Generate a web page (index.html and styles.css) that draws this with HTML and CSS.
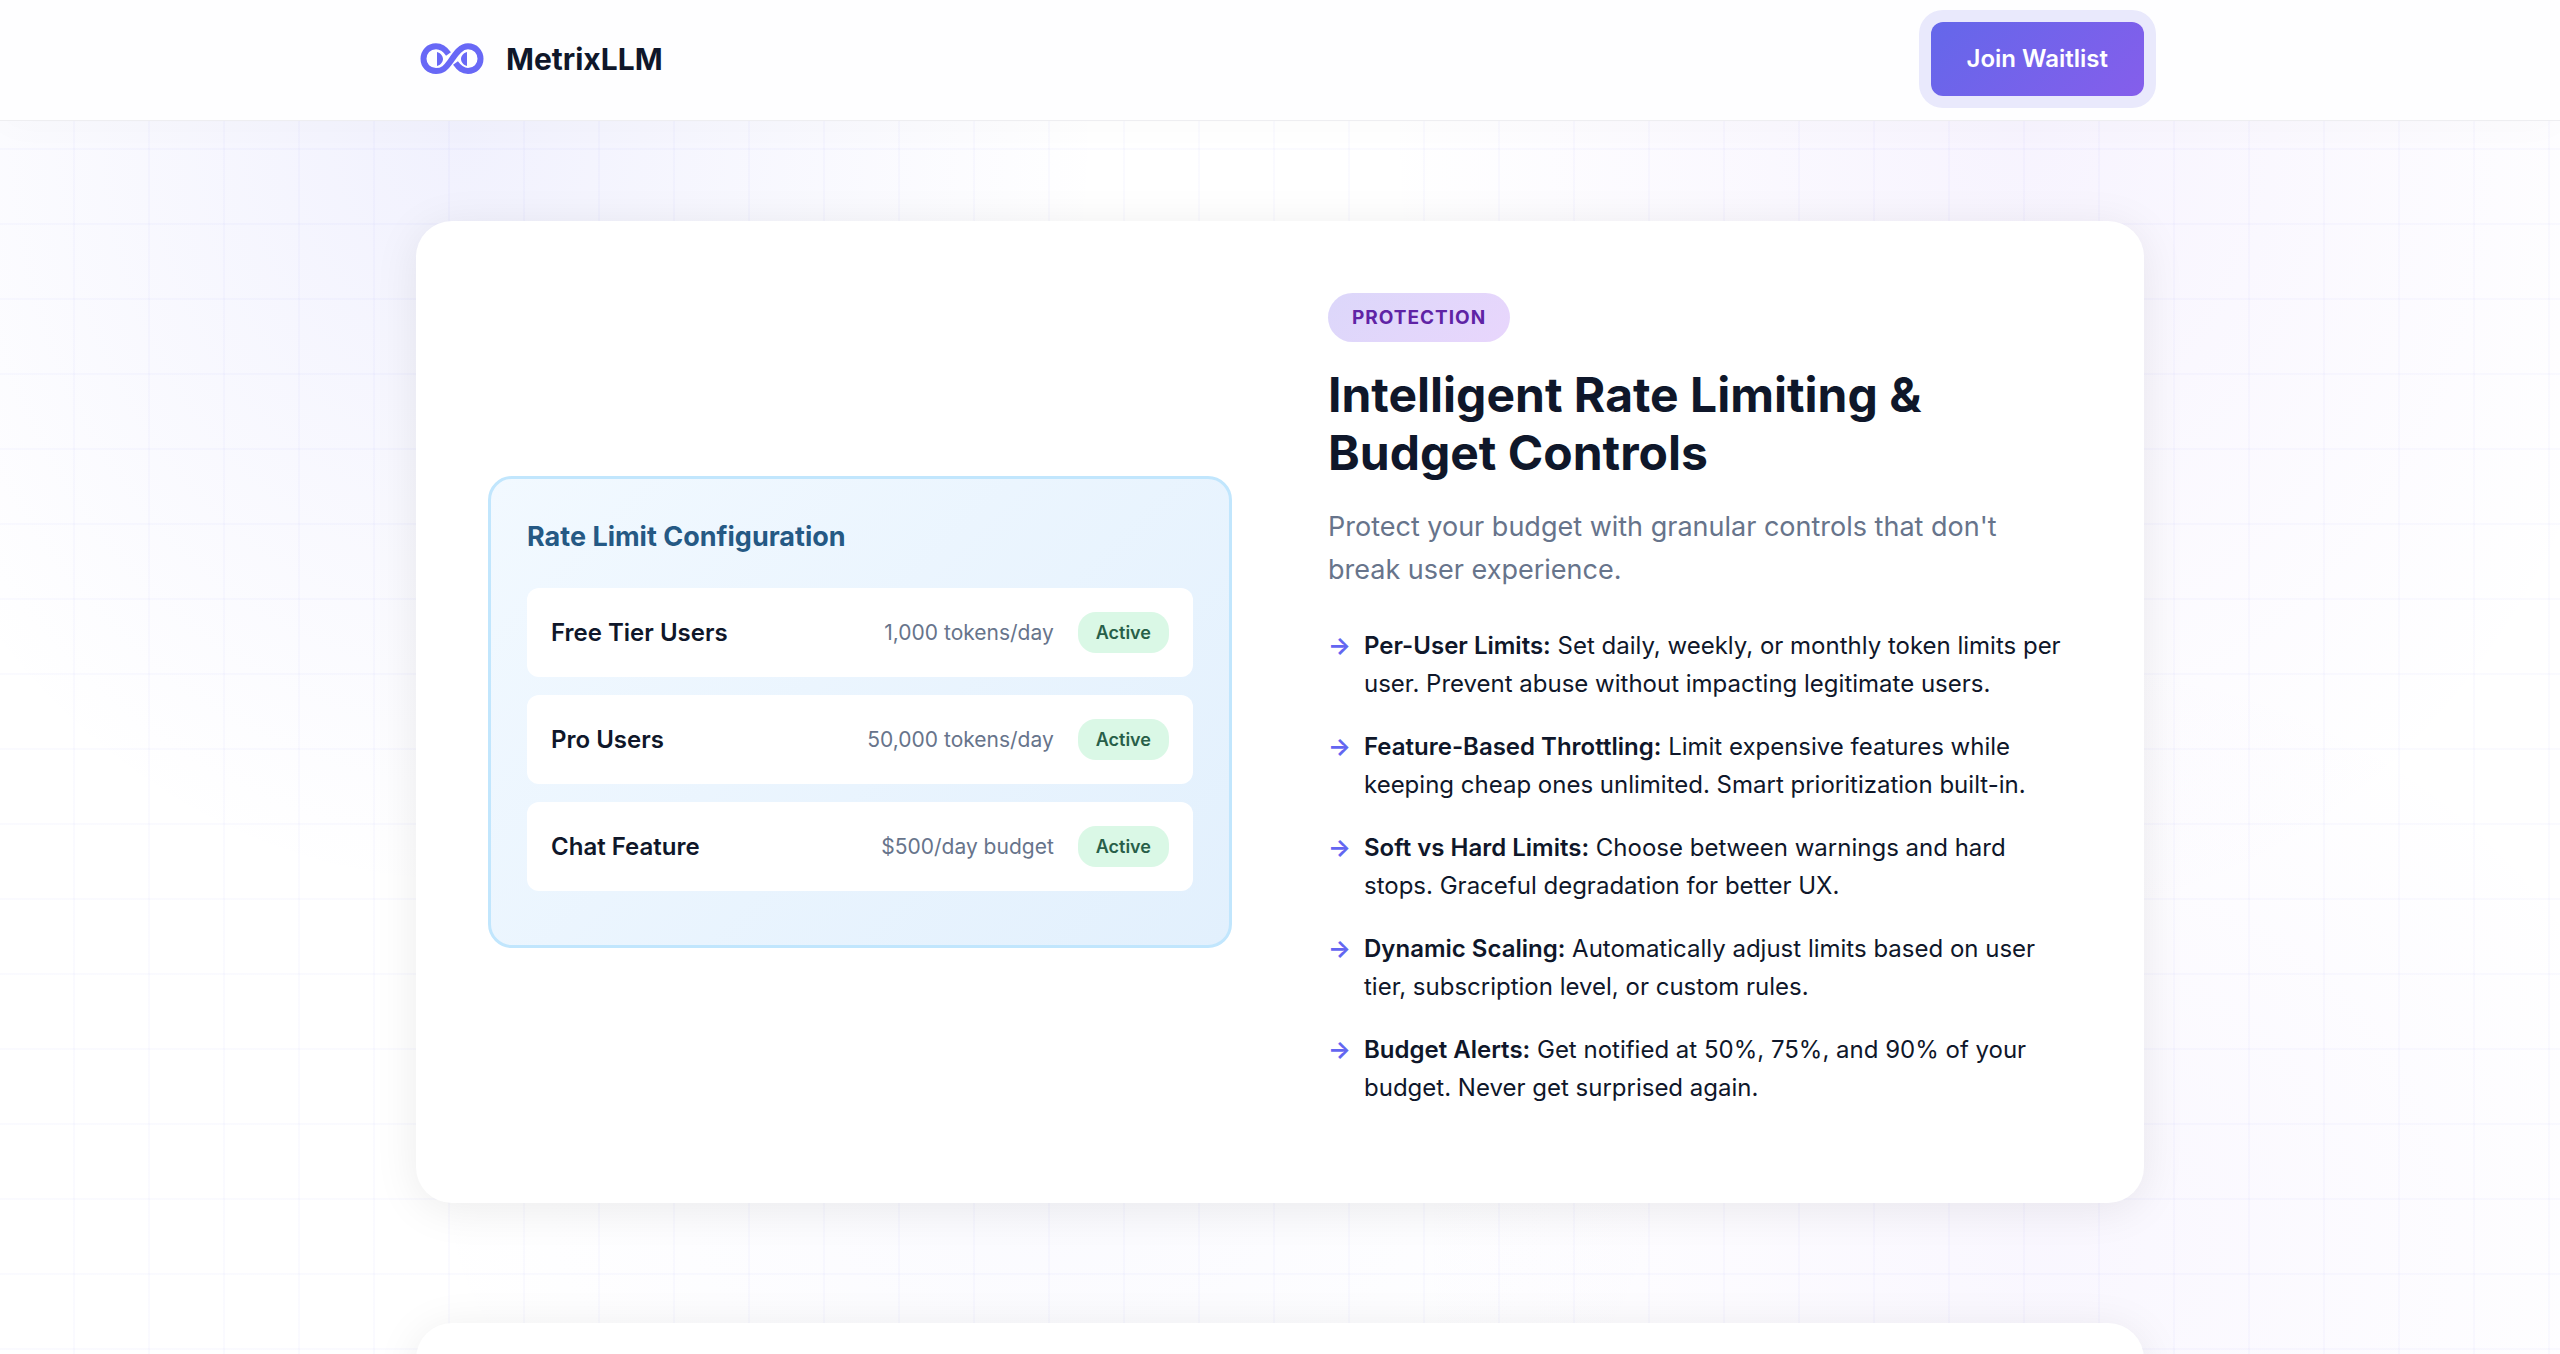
FILE: index.html
```html
<!DOCTYPE html>
<html lang="en">
<head>
<meta charset="utf-8">
<meta name="viewport" content="width=device-width, initial-scale=1">
<title>MetrixLLM</title>
<link rel="stylesheet" href="styles.css">
</head>
<body>
<header class="site-header">
  <div class="container header-row">
    <a class="brand" href="#">
      <svg class="brand-logo" viewBox="0 0 72 48" aria-hidden="true">
        <g fill="none" stroke="#6868f6" stroke-width="6">
          <path d="M32.500 19C29 14 26 11.300 20 11.300C12.500 11.300 7.500 17 7.500 23.800C7.500 30.500 12.500 36 20 36C27 36 30 32.500 34 27C39 20 44 11.300 52 11.300C59.500 11.300 64.500 17 64.500 23.800C64.500 30.500 59.500 36 52 36C46.500 36 43.500 33.500 39.500 28"/>
        </g>
        <path fill="#6868f6" d="M21 17C24.500 18 27 21 27 24C27 27 24.500 30 21 31ZM51 17C47.500 18 45 21 45 24C45 27 47.500 30 51 31Z"/>
      </svg>
      <span class="brand-name">MetrixLLM</span>
    </a>
    <button class="btn-primary" type="button">Join Waitlist</button>
  </div>
</header>
<main class="container sections">
  <section class="card">
    <div class="panel">
      <h3 class="panel-title">Rate Limit Configuration</h3>
      <ul class="limits">
        <li class="limit"><span class="limit-name">Free Tier Users</span><span class="limit-value">1,000 tokens/day</span><span class="status">Active</span></li>
        <li class="limit"><span class="limit-name">Pro Users</span><span class="limit-value">50,000 tokens/day</span><span class="status">Active</span></li>
        <li class="limit"><span class="limit-name">Chat Feature</span><span class="limit-value">$500/day budget</span><span class="status">Active</span></li>
      </ul>
    </div>
    <div class="copy">
      <span class="tag">PROTECTION</span>
      <h2 class="title">Intelligent Rate Limiting &amp; Budget Controls</h2>
      <p class="lead">Protect your budget with granular controls that don't break user experience.</p>
      <ul class="features">
        <li class="feature"><p><strong>Per-User Limits:</strong> Set daily, weekly, or monthly token limits per user. Prevent abuse without impacting legitimate users.</p></li>
        <li class="feature"><p><strong>Feature-Based Throttling:</strong> Limit expensive features while keeping cheap ones unlimited. Smart prioritization built-in.</p></li>
        <li class="feature"><p><strong>Soft vs Hard Limits:</strong> Choose between warnings and hard stops. Graceful degradation for better UX.</p></li>
        <li class="feature"><p><strong>Dynamic Scaling:</strong> Automatically adjust limits based on user tier, subscription level, or custom rules.</p></li>
        <li class="feature"><p><strong>Budget Alerts:</strong> Get notified at 50%, 75%, and 90% of your budget. Never get surprised again.</p></li>
      </ul>
    </div>
  </section>
  <section class="card"></section>
</main>
</body>
</html>
```
FILE: styles.css
```css
* { box-sizing: border-box; margin: 0; padding: 0; }

body {
  font-family: Inter, "Liberation Sans", sans-serif;
  font-size: 24px;
  line-height: 38px;
  color: #0f172a;
  background-color: #fff;
  background-image:
    linear-gradient(to right, transparent 73px, rgba(99, 102, 241, .03) 73px),
    linear-gradient(to bottom, transparent 73px, rgba(99, 102, 241, .03) 73px),
    radial-gradient(ellipse 640px 760px at 18% 10%, rgba(99, 102, 241, .09), transparent),
    radial-gradient(ellipse 640px 800px at 79% 10%, rgba(139, 92, 246, .07), transparent),
    radial-gradient(ellipse 640px 600px at 80% 92%, rgba(139, 92, 246, .05), transparent),
    radial-gradient(ellipse 640px 400px at 41% 88%, rgba(99, 102, 241, .03), transparent);
  background-size: 75px 75px, 75px 75px, auto, auto, auto, auto;
  background-attachment: fixed;
}

ul { list-style: none; }

.container { width: 100%; max-width: 1800px; margin: 0 auto; padding: 0 36px; }

.site-header {
  padding: 22px 0 24px;
  background: #fefeff;
  border-bottom: 1px solid #eeeef1;
  box-shadow: 0 6px 36px rgba(0, 0, 0, .02);
}
.header-row { display: flex; align-items: center; justify-content: space-between; }
.brand { display: flex; align-items: center; gap: 18px; color: inherit; text-decoration: none; }
.brand-logo { width: 72px; height: 48px; }
.brand-name { font-size: 30px; line-height: 48px; font-weight: 700; }

.btn-primary {
  padding: 18px 36px;
  border: 0;
  border-radius: 12px;
  font: 600 24px/38px Inter, "Liberation Sans", sans-serif;
  color: #fff;
  background: linear-gradient(135deg, #6467ea, #855eeb);
  box-shadow: 0 0 0 12px #e9e9fc;
}

.sections { display: grid; gap: 120px; padding-top: 100px; }

.card {
  display: grid;
  grid-template-columns: 1fr 1fr;
  gap: 96px;
  align-items: center;
  padding: 72px;
  border-radius: 36px;
  background: #fff;
  box-shadow: 0 6px 45px rgba(0, 0, 0, .08);
}

.panel {
  padding: 36px;
  border: 3px solid #c1e6fd;
  border-radius: 24px;
  background: linear-gradient(135deg, #f2f9ff, #e2f0fd);
}
.panel-title { margin-bottom: 30px; font-size: 27px; line-height: 43px; font-weight: 700; color: #255984; }
.limits { display: grid; gap: 18px; margin-bottom: 18px; }
.limit { display: flex; align-items: center; gap: 24px; padding: 24px; border-radius: 12px; background: #fff; }
.limit-name { flex: 1; font-weight: 600; }
.limit-value { font-size: 21px; color: #67748b; }
.status {
  padding: 6px 18px;
  border-radius: 18px;
  font-size: 18px;
  line-height: 29px;
  font-weight: 600;
  color: #285f49;
  background: #daf8e6;
}

.copy { display: flex; flex-direction: column; align-items: flex-start; }
.tag {
  padding: 9px 24px;
  border-radius: 30px;
  font-size: 19px;
  line-height: 31px;
  font-weight: 700;
  letter-spacing: 1px;
  color: #5f23a5;
  background: linear-gradient(135deg, #dcd7fa, #e8d6fc);
}
.title { margin: 24px 0 23px; font-size: 48px; line-height: 58px; font-weight: 700; }
.lead { margin-bottom: 36px; font-size: 27px; line-height: 43px; color: #67748b; }
.features { display: grid; gap: 25px; padding-bottom: 24px; }
.feature { display: grid; grid-template-columns: 36px 1fr; }
.feature::before { content: "→"; font-weight: 700; color: #6366f1; }
.feature strong { font-weight: 600; }
```
